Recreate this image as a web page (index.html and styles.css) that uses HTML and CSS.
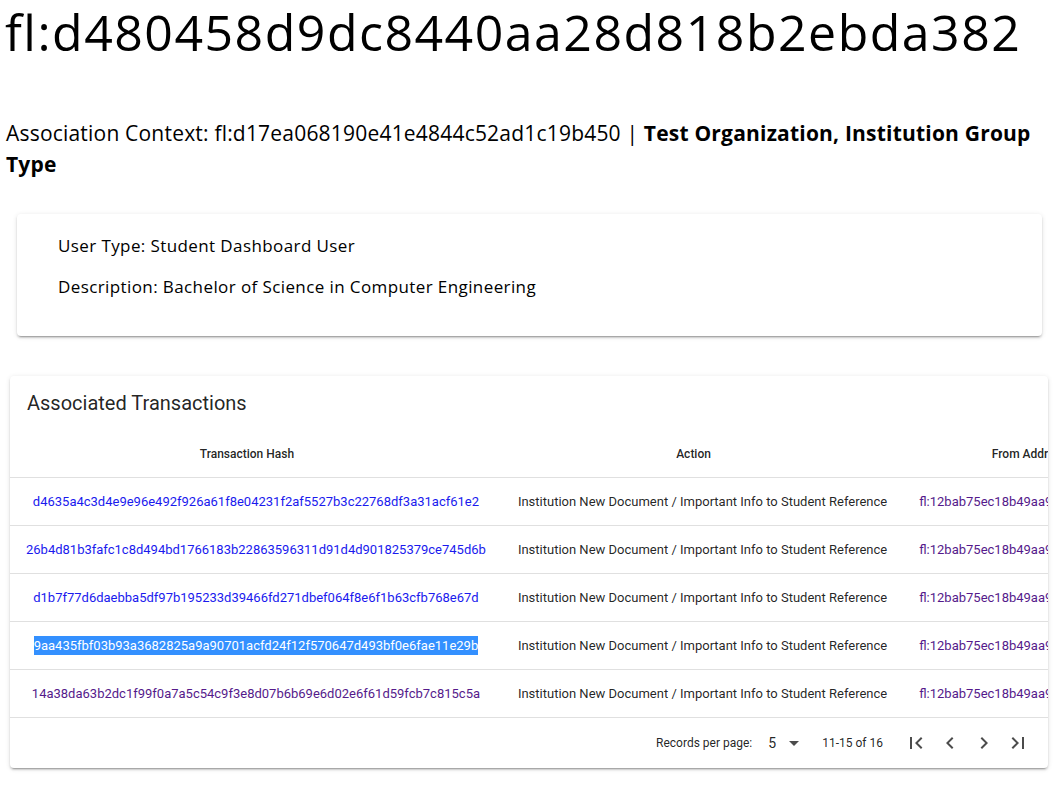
FILE: index.html
```html
<!DOCTYPE html>
<html lang="en">
<head>
<meta charset="utf-8">
<title>fl:d480458d9dc8440aa28d818b2ebda382</title>
<link rel="stylesheet" href="styles.css">
</head>
<body>
<main class="page">
  <h1 class="title">fl:d480458d9dc8440aa28d818b2ebda382</h1>
  <h3 class="context">Association Context: fl:d17ea068190e41e4844c52ad1c19b450 | <strong>Test Organization, Institution Group Type</strong></h3>

  <section class="card info-card">
    <p>User Type: Student Dashboard User</p>
    <p>Description: Bachelor of Science in Computer Engineering</p>
  </section>

  <section class="card tx-card">
    <div class="tx-title">Associated Transactions</div>
    <div class="table-wrap">
      <table class="tx-table">
        <thead>
          <tr>
            <th class="col-hash">Transaction Hash<span class="sort-space"></span></th>
            <th>Action<span class="sort-space"></span></th>
            <th>From Address<span class="sort-space"></span></th>
            <th>To Address<span class="sort-space"></span></th>
            <th>Date<span class="sort-space"></span></th>
          </tr>
        </thead>
        <tbody>
          <tr>
            <td class="col-hash"><a class="link" href="#">d4635a4c3d4e9e96e492f926a61f8e04231f2af5527b3c22768df3a31acf61e2</a></td>
            <td>Institution New Document / Important Info to Student Reference</td>
            <td><a class="link visited" href="#">fl:12bab75ec18b49aa9e3f0c6d7a21b5e4</a></td>
            <td><a class="link visited" href="#">fl:d480458d9dc8440aa28d818b2ebda382</a></td>
            <td>2020-03-12 10:41:05</td>
          </tr>
          <tr>
            <td class="col-hash"><a class="link" href="#">26b4d81b3fafc1c8d494bd1766183b22863596311d91d4d901825379ce745d6b</a></td>
            <td>Institution New Document / Important Info to Student Reference</td>
            <td><a class="link visited" href="#">fl:12bab75ec18b49aa9e3f0c6d7a21b5e4</a></td>
            <td><a class="link visited" href="#">fl:d480458d9dc8440aa28d818b2ebda382</a></td>
            <td>2020-03-12 10:39:47</td>
          </tr>
          <tr>
            <td class="col-hash"><a class="link" href="#">d1b7f77d6daebba5df97b195233d39466fd271dbef064f8e6f1b63cfb768e67d</a></td>
            <td>Institution New Document / Important Info to Student Reference</td>
            <td><a class="link visited" href="#">fl:12bab75ec18b49aa9e3f0c6d7a21b5e4</a></td>
            <td><a class="link visited" href="#">fl:d480458d9dc8440aa28d818b2ebda382</a></td>
            <td>2020-03-12 10:38:12</td>
          </tr>
          <tr>
            <td class="col-hash"><a class="link selected" href="#">9aa435fbf03b93a3682825a9a90701acfd24f12f570647d493bf0e6fae11e29b</a></td>
            <td>Institution New Document / Important Info to Student Reference</td>
            <td><a class="link visited" href="#">fl:12bab75ec18b49aa9e3f0c6d7a21b5e4</a></td>
            <td><a class="link visited" href="#">fl:d480458d9dc8440aa28d818b2ebda382</a></td>
            <td>2020-03-12 10:36:30</td>
          </tr>
          <tr>
            <td class="col-hash"><a class="link visited" href="#">14a38da63b2dc1f99f0a7a5c54c9f3e8d07b6b69e6d02e6f61d59fcb7c815c5a</a></td>
            <td>Institution New Document / Important Info to Student Reference</td>
            <td><a class="link visited" href="#">fl:12bab75ec18b49aa9e3f0c6d7a21b5e4</a></td>
            <td><a class="link visited" href="#">fl:d480458d9dc8440aa28d818b2ebda382</a></td>
            <td>2020-03-12 10:35:02</td>
          </tr>
        </tbody>
      </table>
    </div>
    <div class="actions">
      <span class="rpp-label">Records per page:</span>
      <span class="rpp-select">
        <span class="rpp-value">5</span>
        <svg class="icon" viewBox="0 0 24 24"><path d="M7 10l5 5 5-5z"/></svg>
      </span>
      <span class="range">11-15 of 16</span>
      <span class="nav">
        <svg class="icon" viewBox="0 0 24 24"><path d="M18.41 16.59L13.82 12l4.59-4.59L17 6l-6 6 6 6zM6 6h2v12H6z"/></svg>
        <svg class="icon" viewBox="0 0 24 24"><path d="M15.41 7.41L14 6l-6 6 6 6 1.41-1.41L10.83 12z"/></svg>
        <svg class="icon" viewBox="0 0 24 24"><path d="M10 6L8.59 7.41 13.17 12l-4.58 4.59L10 18l6-6z"/></svg>
        <svg class="icon" viewBox="0 0 24 24"><path d="M5.59 7.41L10.18 12l-4.59 4.59L7 18l6-6-6-6zM16 6h2v12h-2z"/></svg>
      </span>
    </div>
  </section>
</main>
</body>
</html>
```

FILE: styles.css
```css
html, body {
  margin: 0;
  padding: 0;
  background: #ffffff;
}

.page {
  display: flex;
  flex-direction: column;
  color: #000000;
  font-family: "Open Sans", "Noto Sans", sans-serif;
}

.title {
  margin: 0;
  padding-left: 5px;
  font-size: 50px;
  line-height: 64px;
  font-weight: 400;
  letter-spacing: 1.5px;
  white-space: nowrap;
}

.context {
  margin: 54px 0 0;
  padding-left: 6px;
  padding-right: 8px;
  font-size: 21px;
  line-height: 31px;
  font-weight: 400;
  letter-spacing: 0.2px;
}

.context strong {
  font-weight: 700;
}

.card {
  background: #ffffff;
  border-radius: 4px;
  box-shadow: 0 3px 1px -2px rgba(0,0,0,.2), 0 2px 2px 0 rgba(0,0,0,.14), 0 1px 5px 0 rgba(0,0,0,.12);
}

.info-card {
  margin: 34px 15px 0 17px;
  padding: 19px 41px 21px;
}

.info-card p {
  margin: 0 0 16px;
  font-size: 17px;
  line-height: 25px;
  letter-spacing: 0.4px;
}

.tx-card {
  margin: 40px 9px 29px 10px;
  overflow: hidden;
  font-family: Roboto, "Liberation Sans", sans-serif;
  color: rgba(0,0,0,.87);
}

.tx-title {
  padding: 13px 17px;
  font-size: 20px;
  line-height: 28px;
  font-weight: 400;
}

.table-wrap {
  overflow: hidden;
}

.tx-table {
  border-collapse: collapse;
  border-spacing: 0;
  min-width: 100%;
}

.tx-table th {
  height: 47px;
  padding: 0 16px;
  font-size: 12px;
  font-weight: 500;
  color: rgba(0,0,0,.87);
  text-align: center;
  white-space: nowrap;
  border-bottom: 1px solid rgba(0,0,0,.12);
}

.sort-space {
  display: inline-block;
  width: 18px;
}

.tx-table td {
  height: 47px;
  padding: 0 16px;
  font-size: 13px;
  white-space: nowrap;
  text-align: left;
  border-bottom: 1px solid rgba(0,0,0,.12);
}

.tx-table td.col-hash {
  text-align: center;
}

.link {
  color: #1a1aee;
  text-decoration: none;
}

.link.visited {
  color: #551a8b;
}

.link.selected {
  color: #ffffff;
  background: #3390ff;
  padding: 2px 0;
}

.actions {
  display: flex;
  align-items: center;
  justify-content: flex-end;
  height: 50px;
  padding-right: 18px;
  font-size: 12px;
  color: rgba(0,0,0,.87);
}

.rpp-label {
  margin-right: 16px;
}

.rpp-select {
  display: flex;
  align-items: center;
  margin-right: 16px;
}

.rpp-value {
  font-size: 14px;
  width: 14px;
}

.range {
  margin-right: 21px;
}

.nav {
  display: flex;
  gap: 10px;
}

.icon {
  width: 24px;
  height: 24px;
  fill: rgba(0,0,0,.7);
  display: block;
}
```
